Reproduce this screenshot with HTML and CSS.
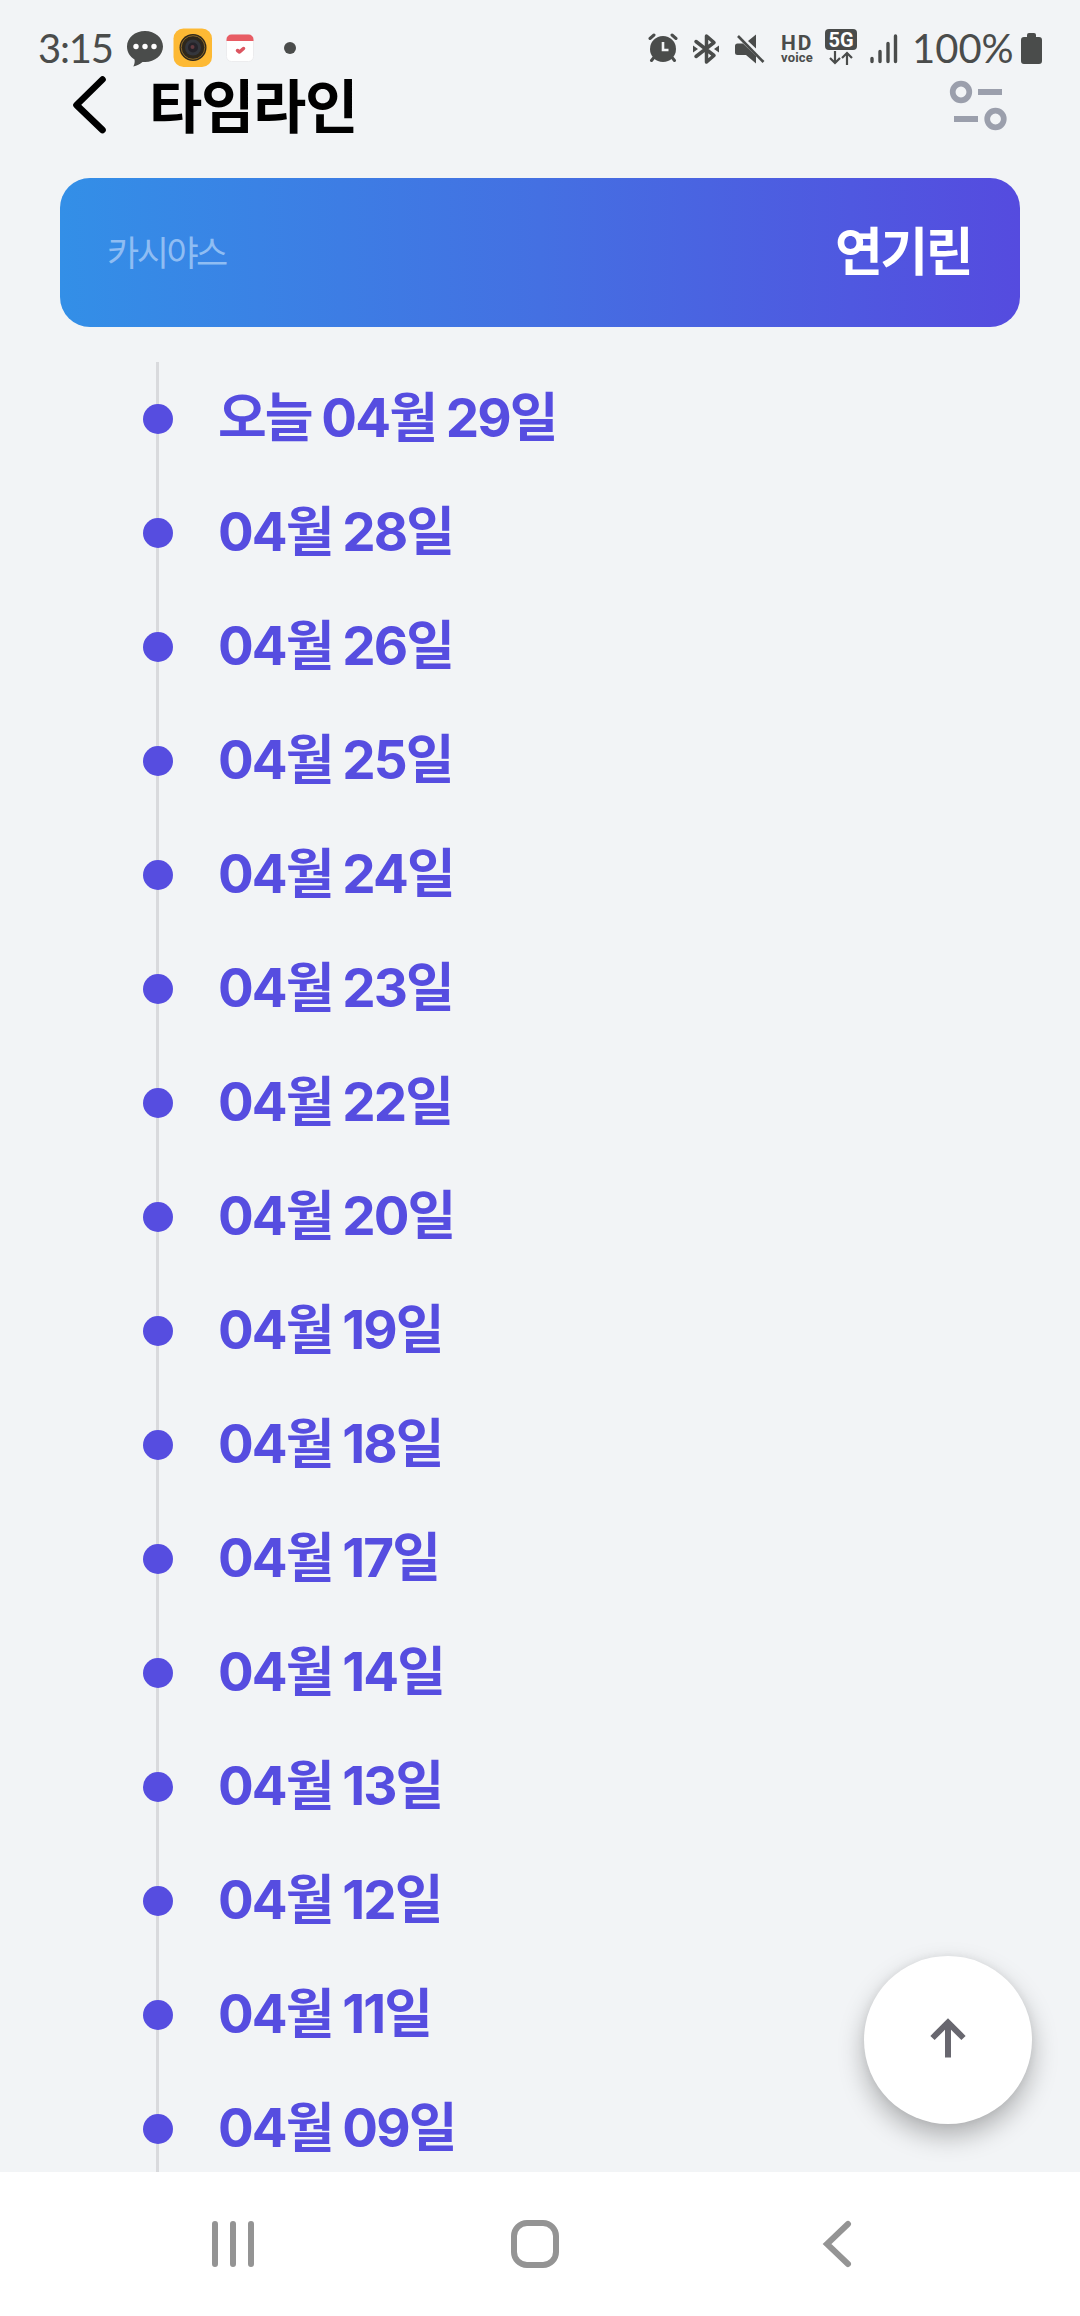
FILE: index.html
```
<!DOCTYPE html>
<html lang="ko">
<head>
    <meta charset="UTF-8">
    <meta name="viewport" content="width=device-width, initial-scale=1.0">
    <title>타임라인</title>
    <link rel="stylesheet" href="styles.css">
</head>
<body>
    <div class="status-bar">
        <span class="clock">3:15</span>
        <svg class="icon-chat" width="36" height="36" viewBox="0 0 36 36">
            <path d="M18 0C8 0 0 6.8 0 15.500C0 21 2.800 25.500 7.500 28.500C8 31 7.500 33 6.300 35.500C10 34.500 13 33 15.500 31H18C28 31 36 24 36 15.500S28 0 18 0Z" fill="#4a4c4b"/>
            <g fill="#fff"><circle cx="9" cy="15.500" r="2.700"/><circle cx="18" cy="15.500" r="2.700"/><circle cx="27" cy="15.500" r="2.700"/></g>
        </svg>
        <svg class="icon-camera" width="40" height="40" viewBox="0 0 40 40">
            <rect x="0.500" y="0.500" width="38.500" height="38.500" rx="10" fill="#fdb934"/>
            <circle cx="20" cy="19.500" r="13.500" fill="#2e271b"/>
            <circle cx="20" cy="19.500" r="11.800" fill="none" stroke="#a37a2c" stroke-width="0.800"/>
            <circle cx="20" cy="19.500" r="8" fill="#34363c"/>
            <circle cx="20" cy="19.500" r="5" fill="#252329"/>
            <circle cx="19.500" cy="19" r="2" fill="#643b40"/>
        </svg>
        <svg class="icon-calendar" width="28" height="28" viewBox="0 0 28 28">
            <rect x="0.500" y="0.500" width="27" height="27" rx="5" fill="#fff" stroke="#ececee"/>
            <path d="M0.500 7V5.500A5 5 0 0 1 5.500 0.500H22.500A5 5 0 0 1 27.500 5.500V7Z" fill="#e85c64"/>
            <path d="M11.500 16.500L13.500 18L17.500 14.500" fill="none" stroke="#dc5560" stroke-width="3.500" stroke-linecap="round" stroke-linejoin="round"/>
        </svg>
        <span class="more-dot"></span>

        <div class="status-right">
            <svg class="icon-alarm" width="30" height="30" viewBox="0 0 30 30">
                <g stroke="#4a4c4b" stroke-width="3" stroke-linecap="round">
                    <path d="M2 5.500L6 2M28 5.500L24 2M5.500 25L3.500 27.500M24.500 25L26.500 27.500"/>
                </g>
                <circle cx="15" cy="16" r="13" fill="#4a4c4b"/>
                <path d="M15 9V17H20.500" fill="none" stroke="#f2f4f6" stroke-width="2.600"/>
            </svg>
            <svg class="icon-bluetooth" width="28" height="32" viewBox="0 0 28 32">
                <path d="M4 8.500L22 22.500L14.500 29V3L22 9.500L4 23.500" fill="none" stroke="#4a4c4b" stroke-width="3.500" stroke-linejoin="round" stroke-linecap="round"/>
                <path d="M1 12.500L6 16L1 19.500ZM27 12.500L22 16L27 19.500Z" fill="#4a4c4b"/>
            </svg>
            <svg class="icon-mute" width="30" height="30" viewBox="0 0 30 30">
                <path d="M0 12Q0 9.500 2.500 9.500H8L21 22V29.500L11 21H2.500Q0 21 0 18.500ZM13 7L21 0.500V14.500Z" fill="#4a4c4b"/>
                <path d="M3 2L28.500 28" stroke="#4a4c4b" stroke-width="2.600"/>
            </svg>
            <div class="hd-voice">
                <span class="hd">HD</span>
                <span class="voice">voice</span>
            </div>
            <div class="network">
                <span class="network-type">5G</span>
                <svg width="24" height="14" viewBox="0 0 24 14">
                    <path d="M6 0V11.500M1 7L6 12L11 7M18 14V2.500M13 7L18 2L23 7" fill="none" stroke="#4a4c4b" stroke-width="2.200"/>
                </svg>
            </div>
            <svg class="icon-signal" width="28" height="30" viewBox="0 0 28 30">
                <path d="M2 24.500V27.500M10 17.500V27.500M18 9.500V27.500M25.500 2V27.500" stroke="#4a4c4b" stroke-width="3.400" stroke-linecap="round"/>
            </svg>
            <span class="battery-level">100%</span>
            <svg class="icon-battery" width="21" height="31" viewBox="0 0 21 31">
                <path d="M6 4V2Q6 0 8 0H13Q15 0 15 2V4H18Q21 4 21 7V28Q21 31 18 31H3Q0 31 0 28V7Q0 4 3 4Z" fill="#4a4c4b"/>
            </svg>
        </div>
    </div>

    <div class="header">
        <svg class="back" width="36" height="58" viewBox="0 0 36 58">
            <path d="M31.500 3.500L5.500 29L31.500 54" fill="none" stroke="#000" stroke-width="6.600" stroke-linecap="round" stroke-linejoin="round"/>
        </svg>
        <h1>타임라인</h1>
        <svg class="filter" width="58" height="52" viewBox="0 0 58 52">
            <g fill="none" stroke="#9b9fac">
                <circle cx="12" cy="13" r="8.300" stroke-width="5.700"/>
                <circle cx="46.500" cy="40" r="8.300" stroke-width="5.700"/>
                <path d="M29 13H53M5 40H29" stroke-width="6"/>
            </g>
        </svg>
    </div>

    <div class="profile-card">
        <span class="server">카시야스</span>
        <span class="character">연기린</span>
    </div>

    <ul class="timeline">
        <li>오늘 04월 29일</li>
        <li>04월 28일</li>
        <li>04월 26일</li>
        <li>04월 25일</li>
        <li>04월 24일</li>
        <li>04월 23일</li>
        <li>04월 22일</li>
        <li>04월 20일</li>
        <li>04월 19일</li>
        <li>04월 18일</li>
        <li>04월 17일</li>
        <li>04월 14일</li>
        <li>04월 13일</li>
        <li>04월 12일</li>
        <li>04월 11일</li>
        <li>04월 09일</li>
    </ul>

    <button class="scroll-top" aria-label="맨 위로">
        <svg width="36" height="40" viewBox="0 0 36 40">
            <path d="M18 39.500V4M2.500 20L18 4.500L33.500 20" fill="none" stroke="#68676f" stroke-width="6"/>
        </svg>
    </button>

    <div class="nav-bar">
        <svg width="48" height="48" viewBox="0 0 48 48">
            <path d="M6 4V44M24 4V44M42 4V44" stroke="#949494" stroke-width="6" stroke-linecap="round"/>
        </svg>
        <svg width="48" height="48" viewBox="0 0 48 48">
            <rect x="3" y="3" width="42" height="42" rx="13" fill="none" stroke="#949494" stroke-width="6"/>
        </svg>
        <svg width="48" height="48" viewBox="0 0 48 48">
            <path d="M35 4L14 24L35 44" fill="none" stroke="#949494" stroke-width="6" stroke-linecap="round"/>
        </svg>
    </div>
</body>
</html>
```

FILE: styles.css
```
* {
    box-sizing: border-box;
}
body {
    margin: 0;
    height: 2316px;
    display: flex;
    flex-direction: column;
    overflow: hidden;
    background-color: #f2f4f6;
    font-family: Inter, "Noto Sans CJK KR", sans-serif;
}
svg {
    display: block;
    flex: none;
}

/* status bar */
.status-bar {
    display: flex;
    align-items: flex-start;
    height: 70px;
    padding-left: 38px;
    color: #4a4c4b;
}
.clock {
    width: 89px;
    margin-top: 28px;
    font-family: Lato, sans-serif;
    font-size: 40px;
    line-height: 40px;
    letter-spacing: -1.2px;
}
.icon-chat {
    margin-top: 31px;
}
.icon-camera {
    margin: 28px 0 0 10px;
}
.icon-calendar {
    margin: 34px 0 0 13px;
}
.more-dot {
    width: 12px;
    height: 12px;
    margin: 42px 0 0 30px;
    border-radius: 50%;
    background-color: #4a4c4b;
}
.status-right {
    display: flex;
    align-items: flex-start;
    margin-left: auto;
    padding-right: 38px;
}
.icon-alarm {
    margin: 33px 14px 0 0;
}
.icon-bluetooth {
    margin: 33px 15px 0 0;
}
.icon-mute {
    margin: 34px 16px 0 0;
}
.hd-voice {
    display: flex;
    flex-direction: column;
    width: 33px;
    margin: 35px 11px 0 0;
    font-family: Roboto, sans-serif;
    font-weight: 700;
}
.hd {
    font-size: 21px;
    line-height: 17px;
    letter-spacing: 2px;
}
.voice {
    font-size: 13px;
    line-height: 11px;
    letter-spacing: 0.2px;
}
.network {
    display: flex;
    flex-direction: column;
    align-items: center;
    width: 32px;
    margin: 29px 13px 0 0;
}
.network-type {
    width: 32px;
    height: 21px;
    margin-bottom: 1px;
    border-radius: 4px;
    background-color: #4a4c4b;
    color: #fff;
    font-family: Roboto, sans-serif;
    font-size: 20px;
    font-weight: 700;
    line-height: 22px;
    text-align: center;
}
.icon-signal {
    margin: 34px 14px 0 0;
}
.battery-level {
    width: 109px;
    margin-top: 28px;
    font-family: Lato, sans-serif;
    font-size: 40px;
    line-height: 40px;
}
.icon-battery {
    margin-top: 33px;
}

/* header */
.header {
    display: flex;
    align-items: center;
    height: 70px;
    padding: 0 73px 0 71px;
}
h1 {
    margin: 0 0 0 42px;
    padding-top: 4px;
    font-size: 58px;
    font-weight: 700;
    line-height: 70px;
    letter-spacing: -1.4px;
}
.filter {
    margin-left: auto;
}

/* profile */
.profile-card {
    display: flex;
    justify-content: space-between;
    align-items: center;
    height: 149px;
    margin: 38px 60px 35px;
    padding: 0 49px 0 47px;
    border-radius: 30px;
    background: linear-gradient(90deg, #338fe7, #4470e2 50%, #554bdf);
}
.server {
    margin-bottom: 4px;
    color: #8fbdf3;
    font-size: 35px;
    letter-spacing: -2.500px;
}
.character {
    margin-bottom: 9px;
    color: #fff;
    font-size: 52px;
    font-weight: 700;
    letter-spacing: -2.500px;
}

/* timeline */
.timeline {
    flex: none;
    height: 1810px;
    margin: 0 0 0 156px;
    padding: 0;
    border-left: 3px solid #d9dadd;
    list-style: none;
}
.timeline li {
    display: flex;
    align-items: flex-start;
    height: 114px;
    color: #564de0;
    font-size: 53px;
    font-weight: 700;
    line-height: 113px;
    letter-spacing: -1.900px;
    word-spacing: -1px;
    white-space: pre;
}
.timeline li::before {
    content: "";
    width: 30px;
    height: 30px;
    margin: 42px 45.500px 0 -16.500px;
    border-radius: 50%;
    background-color: #564de0;
}

.scroll-top {
    position: absolute;
    right: 48px;
    bottom: 192px;
    display: flex;
    align-items: center;
    justify-content: center;
    width: 168px;
    height: 168px;
    padding: 0 0 4px;
    border: none;
    border-radius: 50%;
    background-color: #fff;
    box-shadow: 0 12px 26px rgba(0, 0, 0, 0.28), 0 0 8px rgba(0, 0, 0, 0.06);
}

.nav-bar {
    flex: 1;
    display: flex;
    justify-content: space-between;
    align-items: center;
    padding: 0 219px 0 209px;
    background-color: #fff;
}
```
